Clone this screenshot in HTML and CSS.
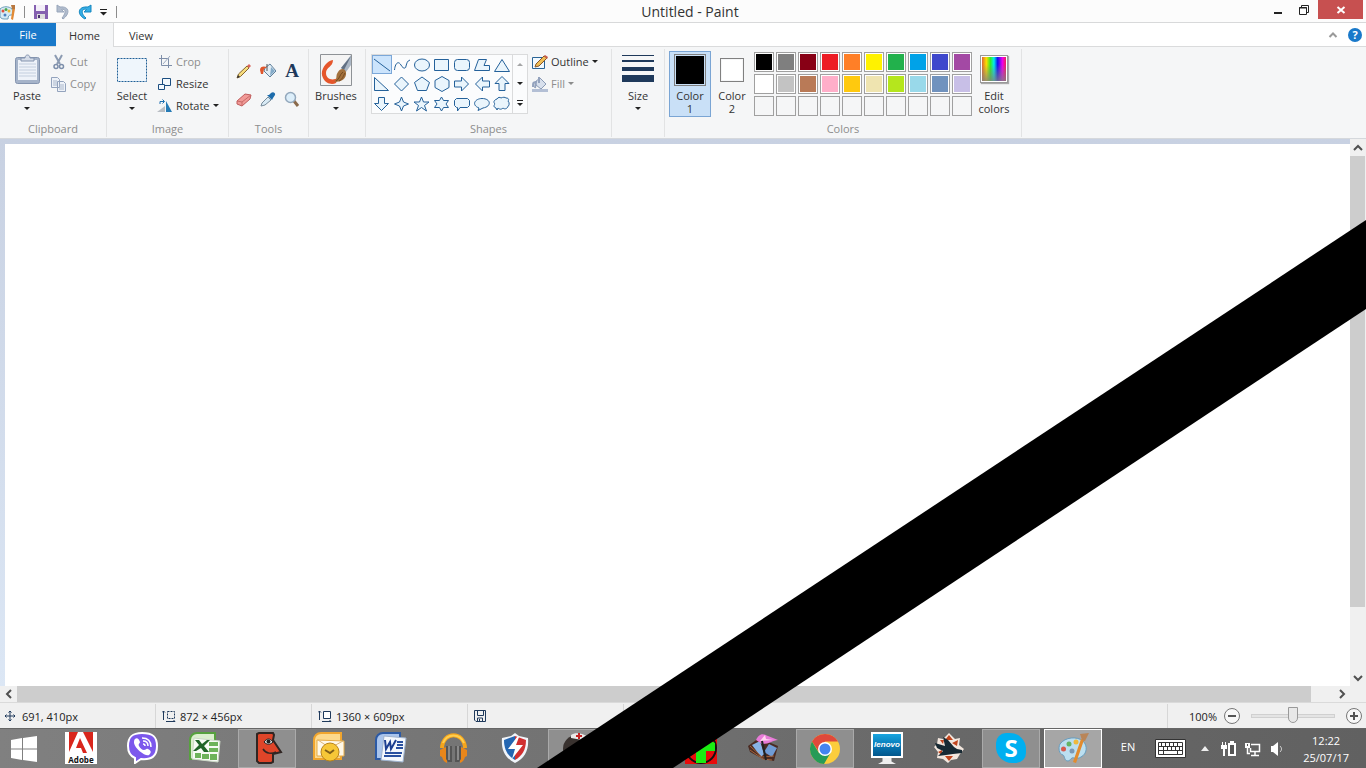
FILE: index.html
```html
<!DOCTYPE html>
<html lang="en">
<head>
<meta charset="UTF-8">
<meta name="viewport" content="width=device-width, initial-scale=1.0">
<title>Untitled - Paint</title>
<link rel="stylesheet" href="styles.css">
</head>
<body>

<header class="titlebar">
    <div class="quick">
        <svg class="app-icon" width="16" height="18" viewBox="0 0 16 18"><path d="M0 6C3 3 9 3 12 6c2 3 1 6-1 6-2 0-3 1-3 4H4c-3 0-4-2-4-3z" fill="#d6ebf5" stroke="#6d9fb9"/><circle cx="3" cy="8" r="1.5" fill="#e0503c"/><circle cx="6" cy="6.500" r="1.500" fill="#4aa850"/><circle cx="9" cy="8" r="1.500" fill="#edb62b"/><circle cx="5" cy="12" r="1.500" fill="#4a80c0"/><path d="M13 2l2 4-2 11-2-1z" fill="#e28a35"/><path d="M11 2h4v4h-3z" fill="#b87840"/></svg>
        <span class="bar"></span>
        <button title="Save"><svg width="16" height="16" viewBox="0 0 16 16"><path d="M1 1h14v14H1z" fill="#8560b0"/><path d="M3 1h9v6H3z" fill="#f3eef8"/><path d="M4 10h8v5H4z" fill="#ddd"/><path d="M5 11h2v3H5z" fill="#4b3370"/></svg></button>
        <button title="Undo"><svg width="16" height="16" viewBox="0 0 16 16"><path d="M2 1v7h7L6.500 5.500C10 4 12 8 7 14l1 1c7-5 7-13-3-12z" fill="#b1bccd" stroke="#98a6bb"/></svg></button>
        <button title="Redo"><svg width="16" height="16" viewBox="0 0 16 16"><path d="M14 1v7H7l2.500-2.500C5 4 3 9 9 14l-1 1C0 11 0 2 11 3z" fill="#35aee6" stroke="#1687bf"/></svg></button>
        <button title="Customize"><svg width="9" height="8" viewBox="0 0 9 8"><path d="M1 1.500h7" stroke="#222"/><path d="M1 4h7L4.500 7.500z" fill="#222"/></svg></button>
        <span class="bar"></span>
    </div>
    <h1>Untitled - Paint</h1>
    <div class="window-buttons">
        <button title="Minimize"><svg width="12" height="12" viewBox="0 0 12 12"><path d="M2 8h8v2H2z" fill="#222"/></svg></button>
        <button title="Restore"><svg width="12" height="12" viewBox="0 0 12 12"><path d="M1.500 3.500h7v7h-7zM3.500 3V1.500h7v7H9M1 4h8" fill="none" stroke="#222"/></svg></button>
        <button class="close" title="Close"><svg width="10" height="10" viewBox="0 0 10 10"><path d="M1.500 2l7 6M8.500 2l-7 6" stroke="#fff" stroke-width="2"/></svg></button>
    </div>
</header>

<nav class="tabs">
    <button class="tab file">File</button>
    <button class="tab active">Home</button>
    <button class="tab">View</button>
    <div class="tabs-right">
        <button title="Minimize the Ribbon"><svg width="10" height="8" viewBox="0 0 10 8"><path d="M1.500 6L5 2.500 8.500 6" fill="none" stroke="#999" stroke-width="2"/></svg></button>
        <button class="help" title="Help">?</button>
    </div>
</nav>

<section class="ribbon">
    <div class="group clipboard">
        <div class="tools">
            <button class="big">
                <svg width="32" height="32" viewBox="0 0 32 32"><rect x="4.500" y="3.500" width="24" height="26" rx="2" fill="#a5b3c9" stroke="#8494af"/><path d="M7 6h19v20H7z" fill="#eef2f9"/><path d="M8 10h17M8 13h17M8 16h17M8 19h17M8 22h17" stroke="#c3cede"/><path d="M10 7V4h4c0-4 5-4 5 0h4v3z" fill="#d5dce8" stroke="#8494af"/></svg>
                <span>Paste</span><i class="arrow"></i>
            </button>
            <div class="stack">
                <button class="small" disabled><svg width="16" height="16" viewBox="0 0 16 16"><path d="M4 1l5 9M11 1L6 10" stroke="#8c9bb2" stroke-width="2"/><circle cx="5" cy="12.500" r="2" fill="none" stroke="#7d8fab" stroke-width="1.500"/><circle cx="10.500" cy="12.500" r="2" fill="none" stroke="#7d8fab" stroke-width="1.500"/></svg>Cut</button>
                <button class="small" disabled><svg width="16" height="16" viewBox="0 0 16 16"><path d="M.5 1.500h6l2 2v8h-8zM6.500 5.500h6l2 2v8h-8z" fill="#eef2f8" stroke="#93a3bd"/><path d="M2 5h4M2 7h4M2 9h4M8 9h5M8 11h5M8 13h5" stroke="#a9b7cc"/></svg>Copy</button>
            </div>
        </div>
        <h2>Clipboard</h2>
    </div>

    <div class="group image">
        <div class="tools">
            <button class="big">
                <svg width="32" height="32" viewBox="0 0 32 32"><rect x="1.500" y="4.500" width="29" height="23" fill="#eff6fc" stroke="#1f5f96" stroke-dasharray="2 1"/></svg>
                <span>Select</span><i class="arrow"></i>
            </button>
            <div class="stack">
                <button class="small" disabled><svg width="16" height="16" viewBox="0 0 16 16"><path d="M4.500 1v10.500H15M2 4.500h9.500V14" fill="none" stroke="#7f8fa9"/><path d="M6 10l7-8" stroke="#9dabc1"/></svg>Crop</button>
                <button class="small"><svg width="16" height="16" viewBox="0 0 16 16"><path d="M5.500 2.500h8v7h-8z" fill="#f3f9fd" stroke="#1c4e80"/><path d="M1.500 8.500h6v5h-6z" fill="#f3f9fd" stroke="#1c4e80"/></svg>Resize</button>
                <button class="small"><svg width="16" height="16" viewBox="0 0 16 16"><path d="M0 14l8-6v6z" fill="#b9bec4"/><path d="M9 3l6 11H9z" fill="#267bb6"/><path d="M3 6V3.500h4M5.500 1.500l2 2-2 2" fill="none" stroke="#1d6fb0"/></svg>Rotate<i class="arrow"></i></button>
            </div>
        </div>
        <h2>Image</h2>
    </div>

    <div class="group draw">
        <div class="tools draw-grid">
            <button title="Pencil"><svg width="16" height="16" viewBox="0 0 16 16"><path d="M1 15l1.500-4L11 3l2 2-8.500 8.500z" fill="#f6dc7c" stroke="#85652f"/><path d="M11 3l2-2 2 2-2 2z" fill="#d9655a"/><path d="M1 15l1-3 2 2z" fill="#333"/></svg></button>
            <button title="Fill with color"><svg width="16" height="16" viewBox="0 0 16 16"><path d="M5 5l5-4 6 7-6 6-6-6z" fill="#e2edf5" stroke="#5e7f9b"/><path d="M10 13l5-5-4-4z" fill="#84abc9"/><path d="M7 1v7" stroke="#555"/><path d="M0 7c0-4 4-4 7-3L4 6l-1 5H1z" fill="#e0562b"/></svg></button>
            <button class="letter" title="Text">A</button>
            <button title="Eraser"><svg width="16" height="16" viewBox="0 0 16 16"><path d="M1 10l8-7 6 1-1 4-8 7-5-2z" fill="#f19a97" stroke="#bf5c5c"/><path d="M1 10l5 1 9-7M6 11v4" stroke="#c96a68" fill="none"/></svg></button>
            <button title="Color picker"><svg width="16" height="16" viewBox="0 0 16 16"><path d="M1 15l1-3 6-6 3 3-6 5z" fill="#d8eaf5" stroke="#768b9b"/><path d="M7 4l5 5 1-2 2-3c1-2-2-4-4-2L9 4z" fill="#1d6cab"/></svg></button>
            <button title="Magnifier"><svg width="16" height="16" viewBox="0 0 16 16"><path d="M10 10l4 5" stroke="#8a6a4b" stroke-width="3"/><circle cx="6.500" cy="6.500" r="5" fill="#dceefa" stroke="#93a8bc" stroke-width="1.500"/></svg></button>
        </div>
        <h2>Tools</h2>
    </div>

    <div class="group brushes">
        <div class="tools">
            <button class="big">
                <svg width="32" height="32" viewBox="0 0 32 32"><path d="M.5.500h31v31H.5z" fill="#f4f4f4" stroke="#8e9296"/><path d="M13 6C6 7-1 17 3 24c3 6 9 7 13 5l2-5c-6 3-12 1-12-5C6 13 13 13 13 6z" fill="#e5562b"/><path d="M31 1v10l-5 7-5-4z" fill="#aab6c4"/><path d="M31 2L21 14l3 2z" fill="#617083"/><path d="M26 18c1 7-5 10-12 10 4-3 1-6 4-10 2-4 7-4 8 0z" fill="#a3713c"/><path d="M16 27c4-2 3-6 7-9M19 27c4-2 4-5 6-8" stroke="#734a22" fill="none"/></svg>
                <span>Brushes</span><i class="arrow"></i>
            </button>
        </div>
    </div>

    <div class="group shapes">
        <div class="tools">
            <div class="gallery">
                <div class="shape-grid">
                    <button class="selected" title="Line"><svg viewBox="0 0 20 20"><path d="M2 4l16 12"/></svg></button>
                    <button title="Curve"><svg viewBox="0 0 20 20"><path fill="none" d="M2.500 15C3 9 6 5 9 10c2 4 5 4 5 1 1-3 1-5 4-6"/></svg></button>
                    <button title="Oval"><svg viewBox="0 0 20 20"><ellipse cx="10" cy="10" rx="7.500" ry="6"/></svg></button>
                    <button title="Rectangle"><svg viewBox="0 0 20 20"><path d="M2.500 4.500h14v11h-14z"/></svg></button>
                    <button title="Rounded rectangle"><svg viewBox="0 0 20 20"><rect x="2.500" y="4.500" width="15" height="11" rx="3"/></svg></button>
                    <button title="Polygon"><svg viewBox="0 0 20 20"><path d="M6.500 4.500h8l-2.500 6h5.500v5h-15z"/></svg></button>
                    <button title="Triangle"><svg viewBox="0 0 20 20"><path d="M10 4.500l7.500 12h-15z"/></svg></button>
                    <button title="Right triangle"><svg viewBox="0 0 20 20"><path d="M2.500 3.500v13h14z"/></svg></button>
                    <button title="Diamond"><svg viewBox="0 0 20 20"><path d="M9.500 3l7 7-7 7-7-7z"/></svg></button>
                    <button title="Pentagon"><svg viewBox="0 0 20 20"><path d="M10 3l7.500 5.500-3 8h-9l-3-8z"/></svg></button>
                    <button title="Hexagon"><svg viewBox="0 0 20 20"><path d="M10 2.500l7 4v7l-7 4-7-4v-7z"/></svg></button>
                    <button title="Right arrow"><svg viewBox="0 0 20 20"><path d="M2.500 7h7V3l7 7-7 7v-4h-7z"/></svg></button>
                    <button title="Left arrow"><svg viewBox="0 0 20 20"><path d="M17.500 7h-7V3l-7 7 7 7v-4h7z"/></svg></button>
                    <button title="Up arrow"><svg viewBox="0 0 20 20"><path d="M7 16.500v-7H3l7-7 7 7h-4v7z"/></svg></button>
                    <button title="Down arrow"><svg viewBox="0 0 20 20"><path d="M6.500 3.500v6h-4l7 7 7-7h-4v-6z"/></svg></button>
                    <button title="Four-point star"><svg viewBox="0 0 20 20"><path d="M9.500 3l2 5 5 2-5 2-2 5-2-5-5-2 5-2z"/></svg></button>
                    <button title="Five-point star"><svg viewBox="0 0 20 20"><path d="M9.500 3l2 5h5.500l-4.500 3.500 2 5.500-5-3.500-5 3.500 2-5.500L2 8h5.500z"/></svg></button>
                    <button title="Six-point star"><svg viewBox="0 0 20 20"><path d="M9.500 3l2 3.500h5L14 10l2.500 3.500h-5l-2 3.500-2-3.500h-5L5 10 2.500 6.500h5z"/></svg></button>
                    <button title="Rounded callout"><svg viewBox="0 0 20 20"><path d="M4.500 4.500h11l2 2v5l-2 2H8L5.500 17v-3.500h-1l-2-2v-5z"/></svg></button>
                    <button title="Oval callout"><svg viewBox="0 0 20 20"><path d="M6 16.500l1-2.500C-1 11 3 4.500 10 4.500c9 0 10 8 1 9.500z"/></svg></button>
                    <button title="Cloud callout"><svg viewBox="0 0 20 20"><path d="M5 5c1-2 3-2 4-1 2-1 4-1 5 0 3 0 3 2 2 3 2 2 1 5 0 5 0 2-3 4-5 2-2 2-4 1-5 0l-1 2-1-2c-3-1-2-3-1-4-2-2-1-4 2-5z"/></svg></button>
                </div>
                <div class="gallery-scroll">
                    <button title="Up"><i class="arrow up"></i></button>
                    <button title="Down"><i class="arrow"></i></button>
                    <button class="more" title="More"><i class="arrow"></i></button>
                </div>
            </div>
            <div class="stack">
                <button class="small"><svg width="16" height="16" viewBox="0 0 16 16"><path d="M.5 3.500h12v11H.5z" fill="#f2f9fe" stroke="#2a6496"/><path d="M3 13l1-3 8-8 3 2-8 8z" fill="#f0bd55" stroke="#85562a"/><path d="M12 2l1-1 3 2-1 2z" fill="#c85a4a"/></svg>Outline<i class="arrow"></i></button>
                <button class="small" disabled><svg width="16" height="16" viewBox="0 0 16 16"><path d="M3 6l5-4 6 6-5 5-5-4z" fill="#d7dfec" stroke="#8a9ab5"/><path d="M7 1v6M1 11c0-4 0-5 3-5l-1 6" fill="none" stroke="#93a2bd" stroke-width="2"/><path d="M0 13h16v3H0z" fill="#b3bfd5"/></svg>Fill<i class="arrow"></i></button>
            </div>
        </div>
        <h2>Shapes</h2>
    </div>

    <div class="group size">
        <div class="tools">
            <button class="big">
                <svg width="32" height="32" viewBox="0 0 32 32"><path d="M0 1h32v1H0zM0 6h32v2H0zM0 13h32v4H0zM0 21h32v7H0z" fill="#1e395b"/></svg>
                <span>Size</span><i class="arrow"></i>
            </button>
        </div>
    </div>

    <div class="group colors">
        <div class="tools">
            <button class="big current"><span class="swatch black"></span><span>Color<br>1</span></button>
            <button class="big"><span class="swatch white"></span><span>Color<br>2</span></button>
            <div class="palette">
                <button class="black"></button><button class="gray"></button><button class="maroon"></button><button class="red"></button><button class="orange"></button><button class="yellow"></button><button class="green"></button><button class="turquoise"></button><button class="indigo"></button><button class="purple"></button>
                <button class="white"></button><button class="silver"></button><button class="brown"></button><button class="rose"></button><button class="gold"></button><button class="cream"></button><button class="lime"></button><button class="sky"></button><button class="steel"></button><button class="lavender"></button>
                <button></button><button></button><button></button><button></button><button></button><button></button><button></button><button></button><button></button><button></button>
            </div>
            <button class="big"><span class="spectrum"></span><span>Edit<br>colors</span></button>
        </div>
        <h2>Colors</h2>
    </div>
</section>

<main class="workspace">
    <div class="canvas"></div>
    <div class="scroll vertical">
        <button title="Scroll up"><svg width="10" height="8" viewBox="0 0 10 8"><path d="M1 6l4-4 4 4"/></svg></button>
        <div class="track"><div class="thumb"></div></div>
        <button title="Scroll down"><svg width="10" height="8" viewBox="0 0 10 8"><path d="M1 2l4 4 4-4"/></svg></button>
    </div>
    <div class="scroll horizontal">
        <button title="Scroll left"><svg width="8" height="10" viewBox="0 0 8 10"><path d="M6 1L2 5l4 4"/></svg></button>
        <div class="track"><div class="thumb"></div></div>
        <button title="Scroll right"><svg width="8" height="10" viewBox="0 0 8 10"><path d="M2 1l4 4-4 4"/></svg></button>
    </div>
</main>

<footer class="status">
    <div class="cell"><svg width="12" height="12" viewBox="0 0 12 12"><path d="M6 1v10M1 6h10M4.500 2.500L6 1l1.500 1.500M4.500 9.500L6 11l1.500-1.500M2.500 4.500L1 6l1.500 1.500M9.500 4.500L11 6 9.500 7.500" fill="none" stroke="#1e395b"/></svg>691, 410px</div>
    <div class="cell"><svg width="14" height="12" viewBox="0 0 14 12"><path d="M1.500 10V1M0 2.500L1.500 1 3 2.500M4 11.500h9M11.500 10l1.500 1.500" fill="none" stroke="#1e395b"/><path d="M5.500 1.500h7v7h-7z" fill="none" stroke="#1e395b" stroke-dasharray="2 1"/></svg>872 × 456px</div>
    <div class="cell"><svg width="14" height="12" viewBox="0 0 14 12"><path d="M1.500 10V1M0 2.500L1.500 1 3 2.500M4 11.500h9M11.500 10l1.500 1.500" fill="none" stroke="#1e395b"/><path d="M5.500 1.500h7v7h-7z" fill="#fff" stroke="#1e395b"/></svg>1360 × 609px</div>
    <div class="cell"><svg width="12" height="12" viewBox="0 0 12 12"><path d="M.5.500h11v11H2l-1.500-1.500zM3.500.500v5h6v-5M3.500 11V8h5v3M5.500 9v2" fill="none" stroke="#1e395b"/></svg></div>
    <div class="zoom">
        <label for="zoom">100%</label>
        <button title="Zoom out"><svg width="16" height="16" viewBox="0 0 16 16"><circle cx="8" cy="8" r="7.500" fill="#f8f8f8" stroke="#777"/><path d="M4 7h8v2H4z" fill="#555"/></svg></button>
        <input type="range" id="zoom" min="0" max="100" value="50">
        <button title="Zoom in"><svg width="16" height="16" viewBox="0 0 16 16"><circle cx="8" cy="8" r="7.500" fill="#f8f8f8" stroke="#777"/><path d="M4 7h8v2H4zM7 4h2v8H7z" fill="#555"/></svg></button>
    </div>
</footer>

<div class="taskbar">
    <button class="start" title="Start"><svg width="28" height="28" viewBox="0 0 28 28"><path d="M1 5l11-2v10.500H1zM13 3l14-2v12.500H13zM1 14.500h11V25L1 23zM13 14.500h14V27l-14-2z" fill="#fff"/></svg></button>
    <div class="apps">
        <button title="Adobe Reader"><span class="adobe"><svg width="32" height="23" viewBox="0 0 32 23"><path d="M4 0h9L4 20zM18 0h10v20zM15 6l7 15h-4l-2-5h-5z" fill="#d9261c"/></svg>Adobe</span></button>
        <button title="Viber"><svg width="32" height="32" viewBox="0 0 32 32"><path d="M15 1C5 1 1 5 1 14c0 6 2 10 7 12v5l6-4c11 1 16-3 16-13C30 5 26 1 15 1z" fill="#7c58ec" stroke="#fff" stroke-width="2"/><path d="M8 7c2-2 4 0 5 3 0 1-2 2-1 4s3 4 5 4 2-2 4-1c4 2 3 4 1 6-3 2-14-6-15-12 0-2 0-3 1-4z" fill="#fff"/><path d="M15 6c6 0 9 3 9 9M16 9c3 0 5 2 5 5M16 12c1 0 2 1 2 2" fill="none" stroke="#fff" stroke-width="1.500"/></svg></button>
        <button title="Excel"><svg width="32" height="32" viewBox="0 0 32 32"><path d="M8 1h18v26H1V8c0-4 3-7 7-7z" fill="#dcefcf" stroke="#57a13f" stroke-width="2"/><path d="M5 6l26 3-2 21-26-3z" fill="#f7fbf5" stroke="#ccd9c7"/><path d="M20 10h9v4h-9zM20 16h9v4h-9zM6 21h6v5H6zM13 22h7v5h-7zM21 22h7v6h-7z" fill="#6db35a"/><path d="M6 8h4l3 4 5-4h3l-6 6 5 6h-5l-3-4-5 3H4l6-6z" fill="#206528"/></svg></button>
        <button class="open" title="FaceIcon"><svg width="32" height="32" viewBox="0 0 32 32"><path d="M6 2l2-1h14l1 2-1 5 8 12-8 2 0 8-2 1H8l-2-2z" fill="#df4529" stroke="#302522" stroke-width="2"/><path d="M13 10c3-4 6-4 9 0-3 3-6 3-9 0z" fill="#ddd" stroke="#222"/><circle cx="17.500" cy="9.500" r="2" fill="#222"/><path d="M12 17c3 5 9 5 13 3" fill="none" stroke="#302522" stroke-width="1.500"/></svg></button>
        <button title="Outlook"><svg width="32" height="32" viewBox="0 0 32 32"><path d="M8 1h20v26H1V8c0-4 3-7 7-7z" fill="#fdd98c" stroke="#f1a52d" stroke-width="2"/><path d="M4 8l27 1v15H4z" fill="#fff8e8" stroke="#e5ab46"/><path d="M5 8l12 8L30 9" fill="none" stroke="#deb574"/><circle cx="17" cy="20" r="9" fill="#f7c737" stroke="#b98419"/><path d="M12 18l5 3 4-3" fill="none" stroke="#81601a" stroke-width="2"/></svg></button>
        <button title="Word"><svg width="32" height="32" viewBox="0 0 32 32"><path d="M8 1h17v26H1V8c0-4 3-7 7-7z" fill="#a9c4ec" stroke="#2c5aa5" stroke-width="2"/><path d="M9 4l22 2-3 24-22-2z" fill="#f4f8fd" stroke="#9eb2ce"/><path d="M22 10h6M22 13h6M21 16h7M10 21h17M9 24h17" stroke="#2950a0" stroke-width="2"/><path d="M10 8l1 9 4-7 1 7 5-9" fill="none" stroke="#1c3f91" stroke-width="2"/></svg></button>
        <button title="Music"><svg width="32" height="32" viewBox="0 0 32 32"><path d="M5 16C6-1 27-1 28 16" fill="none" stroke="#f5a51c" stroke-width="4"/><path d="M6 11C10 1 23 1 27 11" fill="none" stroke="#ffce4e" stroke-width="2"/><path d="M10 15v16c-3-1-4-3-5-6l-2-1v-6l2-1c1-1 3-2 5-2zM23 15v16c3-1 4-3 5-6l2-1v-6l-2-1c-1-1-3-2-5-2z" fill="#e8861b"/><path d="M9 14h6v16h-4l-2-3zM18 14h6v13l-2 3h-4z" fill="#555"/><path d="M11 14h2v14h-2zM20 14h2v14h-2z" fill="#8a8a8a"/></svg></button>
        <button title="Antivirus"><svg width="32" height="32" viewBox="0 0 32 32"><path d="M16 1l4 3 9 2c1 12-3 20-13 25C6 26 2 18 3 6l9-2z" fill="#f1f5fa"/><path d="M16 4v24C9 24 5 18 5 8z" fill="#2466b2"/><path d="M16 4l11 4c0 10-4 16-11 20z" fill="#d12f30"/><path d="M18 5L9 17h7l-3 10 11-14h-7l3-8z" fill="#fff"/></svg></button>
        <button class="open" title="Ninja"><svg width="32" height="32" viewBox="0 0 32 32"><circle cx="16" cy="17" r="14" fill="#39322f"/><path d="M10 3C14 0 22 1 27 5v4L10 6z" fill="#e9e9e9"/><path d="M15 4h6M18 1v6" stroke="#c52222" stroke-width="2"/></svg></button>
        <button title="Notes"></button>
        <button title="Torrent"><svg width="32" height="32" viewBox="0 0 32 32"><path d="M0 0h32v32H0z" fill="#e80b0b"/><circle cx="16" cy="16" r="15" fill="#e80b0b" stroke="#111" stroke-width="2"/><path d="M11 31V18H2L16 3l14 8v8h-9v12z" fill="#1bee12"/></svg></button>
        <button title="Winds"><svg width="32" height="32" viewBox="0 0 32 32"><path d="M1 14l11-8 19 8-4 15-11-2L3 20z" fill="#4b2b22"/><path d="M5 13l8-4 4 13-3 3z" fill="#87b2e5"/><path d="M22 12l8 4-5 9-8-5z" fill="#6f9bd5"/><path d="M3 14l12 11 12-1M3 18l13 9 9 1" stroke="#a3643c" fill="none"/><path d="M9 8c4-8 8-6 12-4l10 4c-5 0-8 4-16 4z" fill="#e87bd8"/><path d="M13 9l5-6 1 4 7 1z" fill="#ffd5ef"/><path d="M15 9l4 19" stroke="#222" stroke-width="2"/></svg></button>
        <button class="open" title="Chrome"><svg width="32" height="32" viewBox="0 0 32 32"><circle cx="16" cy="17" r="15" fill="#fbcd3c"/><path d="M3 9.500A15 15 0 0 1 29 9.500H16L10 20z" fill="#df493b"/><path d="M3 9.500A15 15 0 0 0 15 32l7-12-12 1z" fill="#269b57"/><circle cx="16" cy="17" r="7" fill="#fff"/><circle cx="16" cy="17" r="5.500" fill="#4384f0"/></svg></button>
        <button title="Lenovo"><span class="lenovo"><b>lenovo</b></span></button>
        <button title="Plane"><svg width="32" height="32" viewBox="0 0 32 32"><path d="M16 1l6 6 5-1-1 7 5 4-4 5-3 5-6 1-3 3-5-4-6-1 1-6-4-5 3-3 1-6 5 1z" fill="#f3e7de"/><path d="M16 3l4 5h-8zM7 8l4 0-1 4zM5 20l4-2 0 5zM16 29l4-5h-8zM25 8l-1 6-5-3z" fill="#c1451e"/><path d="M2 11l10 3-2-9 5 3 6 7 3 2 5 1v3l-9 1-7 1-8 1 5-5-6-3z" fill="#172933"/></svg></button>
        <button class="open" title="Skype"><span class="skype">S</span></button>
        <button class="open current-app" title="Paint"><svg width="32" height="32" viewBox="0 0 32 32"><path d="M3 12C8 5 20 4 26 9c5 5 4 13-2 16-5 3-7 0-9 1s-2 3-4 3c-4 0-3-5-5-6-4-1-5-7-3-11z" fill="#bcdff0" stroke="#679dbf"/><circle cx="6.500" cy="17" r="2.500" fill="#d75a4e"/><circle cx="12" cy="12" r="2.500" fill="#64b365"/><circle cx="19" cy="10" r="2.500" fill="#efb93c"/><circle cx="15" cy="19" r="2.500" fill="#7a98b5"/><path d="M16 30l8-23 3 1-8 23z" fill="#e28b2e"/><path d="M25 8l-2-6 9-1-4 8z" fill="#b98558"/></svg></button>
    </div>
    <div class="tray">
        <span class="lang">EN</span>
        <button title="Keyboard"><svg width="31" height="19" viewBox="0 0 31 19"><path d="M.5.500h30v18H.5z" fill="#fff" stroke="#333"/><path d="M3.500 3.500h24v12h-24zM3 7.500h25M3 11.500h25M6.500 4v4M10.500 4v4M14.500 4v4M18.500 4v4M22.500 4v4M8.500 8v4M12.500 8v4M16.500 8v4M20.500 8v4M24.500 8v4M8.500 12v3M22.500 12v3" fill="none" stroke="#333"/></svg></button>
        <button title="Show hidden icons"><svg width="8" height="5" viewBox="0 0 8 5"><path d="M0 5l4-5 4 5z" fill="#eee"/></svg></button>
        <button title="Battery"><svg width="16" height="16" viewBox="0 0 16 16"><path d="M8 3h6v11H8z" fill="#555" stroke="#fff" stroke-width="2"/><path d="M9 0h4v3H9zM0 4h6v4H4v7H2V8H0zM1 1h1v3H1zM4 1h1v3H4z" fill="#fff"/></svg></button>
        <button title="Network"><svg width="16" height="16" viewBox="0 0 16 16"><path d="M6 3.500h8.500v7H5.500V7M10 11v3M6 14.500h8M2.500 7v5.500H5" fill="none" stroke="#fff" stroke-width="1.500"/><path d="M0 2h5v5H0z" fill="#fff"/><path d="M2 3v2h1V3z" fill="#555"/></svg></button>
        <button title="Volume"><svg width="16" height="16" viewBox="0 0 16 16"><path d="M2 5h2l5-4v14l-5-4H2z" fill="#fff"/><path d="M11 5c2 2 2 4 0 6" fill="none" stroke="#ddd"/></svg></button>
        <time class="clock">12:22<br>25/07/17</time>
    </div>
</div>

<!-- the line drawn across the screen -->
<svg class="stroke" viewBox="0 0 1366 768" preserveAspectRatio="none"><path d="M1366 220L537 768h136l693-459z"/></svg>

</body>
</html>
```

FILE: styles.css
```css
* {
    box-sizing: border-box;
}
body {
    margin: 0;
    height: 100vh;
    position: relative;
    overflow: hidden;
    display: flex;
    flex-direction: column;
    font-family: "Open Sans", "Noto Sans", sans-serif;
    font-size: 11px;
    color: #333;
    background: #fff;
}
button {
    margin: 0;
    padding: 0;
    border: 0;
    background: none;
    font: inherit;
    color: inherit;
    display: flex;
    align-items: center;
    justify-content: center;
}
h1, h2 {
    margin: 0;
    font-weight: normal;
}
svg {
    flex: none;
}

/* title bar */
.titlebar {
    height: 23px;
    flex: none;
    display: grid;
    grid-template-columns: 1fr auto 1fr;
    background: #fcfcfc;
    border-bottom: 1px solid #d8d9da;
}
.titlebar h1 {
    font-size: 14px;
    line-height: 23px;
    padding-left: 14px;
}
.quick {
    display: flex;
    align-items: center;
    gap: 6px;
}
.bar {
    width: 1px;
    height: 12px;
    margin: 0 2px;
    background: #8c8c8c;
}
.window-buttons {
    display: flex;
    justify-content: flex-end;
    padding-right: 3px;
}
.window-buttons button {
    width: 26px;
    height: 19px;
}
.window-buttons .close {
    width: 45px;
    margin-left: 1px;
    background: #c75050;
}

/* tabs */
.tabs {
    height: 24px;
    flex: none;
    display: flex;
    background: #fff;
    border-bottom: 1px solid #dadbdc;
}
.tab {
    width: 54px;
    height: 24px;
}
.tab.file {
    width: 56px;
    height: 23px;
    background: #1979ca;
    color: #fff;
}
.tab.active {
    width: 58px;
    background: #f5f6f7;
    border-right: 1px solid #dadbdc;
}
.tabs-right {
    margin-left: auto;
    padding-right: 4px;
    display: flex;
    align-items: center;
    gap: 10px;
}
.help {
    width: 14px;
    height: 14px;
    border-radius: 50%;
    background: #1979ca;
    color: #fff;
    font-weight: bold;
}

/* ribbon */
.ribbon {
    height: 92px;
    flex: none;
    display: flex;
    padding: 2px 0 1px;
    background: #f5f6f7;
    border-bottom: 1px solid #d5d8dc;
}
.group {
    display: flex;
    flex-direction: column;
    justify-content: space-between;
    border-right: 1px solid #e2e3e4;
}
.group h2 {
    font-size: 11px;
    line-height: 16px;
    text-align: center;
    color: #8d8d8d;
}
.tools {
    display: flex;
    padding: 2px 4px 0;
}
.clipboard { width: 107px; }
.image { width: 122px; }
.draw { width: 80px; }
.brushes { width: 57px; }
.shapes { width: 246px; }
.size { width: 53px; }
.colors { width: 357px; }
.clipboard .tools {
    padding-left: 6px;
}
.clipboard .stack {
    padding-left: 3px;
}
.big {
    width: 42px;
    height: 66px;
    padding-top: 3px;
    flex-direction: column;
    justify-content: flex-start;
    line-height: 13px;
}
.big > :first-child {
    margin-bottom: 3px;
}
.big .arrow {
    margin-top: 5px;
}
.brushes .big {
    width: 46px;
}
.size .big {
    width: 44px;
}
.stack {
    display: flex;
    flex-direction: column;
    align-items: flex-start;
    padding-left: 4px;
}
.small {
    height: 22px;
    gap: 3px;
    padding-bottom: 1px;
}
.small:disabled {
    color: #8d8d8d;
}
.small:disabled .arrow {
    opacity: .5;
}
.arrow {
    border: 3px solid transparent;
    border-top-color: #222;
    border-bottom: 0;
}
.arrow.up {
    transform: rotate(180deg);
    opacity: .4;
}
.draw-grid {
    display: grid;
    grid-template-columns: repeat(3, 24px);
    grid-auto-rows: 28px;
    padding-top: 8px;
    padding-left: 3px;
}
.letter {
    font-family: "Liberation Serif", serif;
    font-size: 19px;
    font-weight: bold;
    color: #1e395b;
}
.gallery {
    display: flex;
    margin: 3px 0 0 1px;
    height: 60px;
    border: 1px solid #dadbdc;
    background: #fbfcfd;
}
.shape-grid {
    display: grid;
    grid-template-columns: repeat(7, 20px);
    grid-template-rows: 19px 20px 19px;
}
.shape-grid svg {
    width: 20px;
    height: 20px;
    fill: #eaf5fc;
    stroke: #24619a;
}
.shape-grid .selected {
    background: #cce4fc;
    outline: 1px solid #7ba7d8;
    outline-offset: -1px;
}
.gallery-scroll {
    width: 15px;
    display: grid;
    grid-template-rows: repeat(3, 1fr);
    border-left: 1px solid #dadbdc;
}
.gallery-scroll .more {
    flex-direction: column;
}
.gallery-scroll .more::before {
    content: "";
    width: 6px;
    height: 1px;
    margin-bottom: 2px;
    background: #222;
}
.current {
    background: #c9e0f7;
    outline: 1px solid #7aa5d4;
    outline-offset: -1px;
}
.swatch {
    width: 32px;
    height: 32px;
    border: 1px solid #808080;
    background-clip: content-box;
    padding: 1px;
}
.swatch.white {
    width: 24px;
    height: 24px;
    margin-top: 4px;
}
.big > .swatch.white {
    margin-bottom: 7px;
}
.palette {
    display: grid;
    grid-template-columns: repeat(10, 20px);
    grid-auto-rows: 20px;
    gap: 2px;
    padding: 1px 0 0 1px;
}
.palette button {
    border: 1px solid #a0a0a0;
}
.palette [class] {
    box-shadow: inset 0 0 0 1px #fff;
}
.black { background-color: #000; }
.gray { background-color: #7f7f7f; }
.maroon { background-color: #880015; }
.red { background-color: #ed1c24; }
.orange { background-color: #ff7f27; }
.yellow { background-color: #fff200; }
.green { background-color: #22b14c; }
.turquoise { background-color: #00a2e8; }
.indigo { background-color: #3f48cc; }
.purple { background-color: #a349a4; }
.white { background-color: #fff; }
.silver { background-color: #c3c3c3; }
.brown { background-color: #b97a57; }
.rose { background-color: #ffaec9; }
.gold { background-color: #ffc90e; }
.cream { background-color: #efe4b0; }
.lime { background-color: #b5e61d; }
.sky { background-color: #99d9ea; }
.steel { background-color: #7092be; }
.lavender { background-color: #c8bfe7; }
.spectrum {
    width: 28px;
    height: 28px;
    margin-top: 1px;
    border: 1px solid #999;
    padding: 1px;
    background: linear-gradient(transparent 30%, #808080cc) content-box, linear-gradient(90deg, #d63, #fd0 18%, #3e2 35%, #0ee 50%, #11e 65%, #e0e 85%, #e25) content-box, #fff;
    box-shadow: 1px 1px 1px #aaa;
}
.big > .spectrum {
    margin-bottom: 6px;
}
.palette + .big {
    margin-left: 1px;
}

/* workspace */
.workspace {
    flex: 1;
    min-height: 0;
    display: grid;
    grid-template-columns: 1fr 16px;
    grid-template-rows: 1fr 16px;
    background: #f0f0f0;
}
.canvas {
    background: #fff;
    border: solid #c8d1e2;
    border-width: 5px 0 0 5px;
    border-image: linear-gradient(#c8d1e2, #dce7f5) 5;
}
.scroll {
    display: flex;
}
.scroll button {
    width: 17px;
    height: 16px;
}
.scroll path {
    fill: none;
    stroke: #505050;
    stroke-width: 2;
}
.scroll .track {
    flex: 1;
}
.thumb {
    background: #cdcdcd;
}
.vertical {
    flex-direction: column;
    padding-right: 1px;
}
.vertical button {
    width: 15px;
    height: 17px;
}
.vertical .thumb {
    height: 88%;
}
.horizontal .thumb {
    height: 100%;
    width: 98.3%;
}

/* status bar */
.status {
    height: 26px;
    flex: none;
    display: flex;
    padding-top: 1px;
    background: #f0f0f0;
    border-top: 1px solid #dadada;
    color: #222;
}
.cell {
    width: 156px;
    padding: 0 4px;
    display: flex;
    align-items: center;
    gap: 6px;
    border-right: 1px solid #d7d7d7;
}
.cell:nth-child(n+2) {
    padding-left: 6px;
    gap: 4px;
}
.zoom {
    margin-left: auto;
    padding-left: 21px;
    padding-right: 4px;
    display: flex;
    align-items: center;
    gap: 7px;
    border-left: 1px solid #d7d7d7;
}
.zoom input {
    appearance: none;
    width: 92px;
    height: 18px;
    margin: 0;
    padding: 0 4px;
    background: none;
}
.zoom input::-webkit-slider-runnable-track {
    height: 4px;
    background: #e4e4e4;
    border: 1px solid #d0d0d0;
}
.zoom input::-webkit-slider-thumb {
    appearance: none;
    width: 10px;
    height: 16px;
    margin-top: -8px;
    background: #e8e8e8;
    border: 1px solid #999;
    border-radius: 0 0 5px 5px;
}

/* taskbar */
.taskbar {
    height: 40px;
    flex: none;
    display: flex;
    background: linear-gradient(90deg, #808080, #737373 40%, #686868 70%, #616161);
    border-top: 1px solid #666;
    color: #fff;
}
.start {
    width: 48px;
}
.apps {
    display: flex;
    gap: 4px;
    padding-left: 4px;
}
.apps button {
    width: 58px;
    padding-bottom: 1px;
}
.apps .open {
    border: 1px solid #aaa;
    background: #8f8f8f;
}
.apps .current-app {
    border-color: #fff;
    background: #a6a6a6;
}
.adobe {
    width: 32px;
    height: 32px;
    background: #fff;
    color: #111;
    font-family: "Open Sans", sans-serif;
    font-size: 8px;
    font-weight: bold;
    line-height: 9px;
    display: flex;
    flex-direction: column;
    align-items: center;
}
.lenovo {
    width: 32px;
    height: 26px;
    position: relative;
    margin-bottom: 6px;
    border: 2px solid #fff;
    background: linear-gradient(#19a5df, #087ab7 50%, #03578c);
    font-family: "Liberation Sans", sans-serif;
    font-size: 8px;
    font-style: italic;
    line-height: 22px;
}
.lenovo::after {
    content: "";
    position: absolute;
    left: 5px;
    top: 24px;
    width: 18px;
    height: 6px;
    background: #eee;
    clip-path: polygon(25% 0, 75% 0, 75% 60%, 100% 100%, 0 100%, 25% 60%);
}
.skype {
    width: 30px;
    height: 30px;
    border-radius: 10px 16px;
    background: #00aff0;
    font-size: 24px;
    font-weight: bold;
    line-height: 29px;
}
.tray {
    margin-left: auto;
    padding-right: 17px;
    display: flex;
    align-items: center;
    gap: 8px;
}
.lang {
    margin-right: 12px;
    padding-bottom: 4px;
}
.tray button:nth-of-type(2) {
    margin: 0 4px 0 7px;
}
.clock {
    margin-left: 10px;
    font-size: 11px;
    line-height: 17px;
    text-align: center;
}

.stroke {
    position: absolute;
    left: 0;
    top: 0;
    width: 100%;
    height: 100%;
    pointer-events: none;
}
```
